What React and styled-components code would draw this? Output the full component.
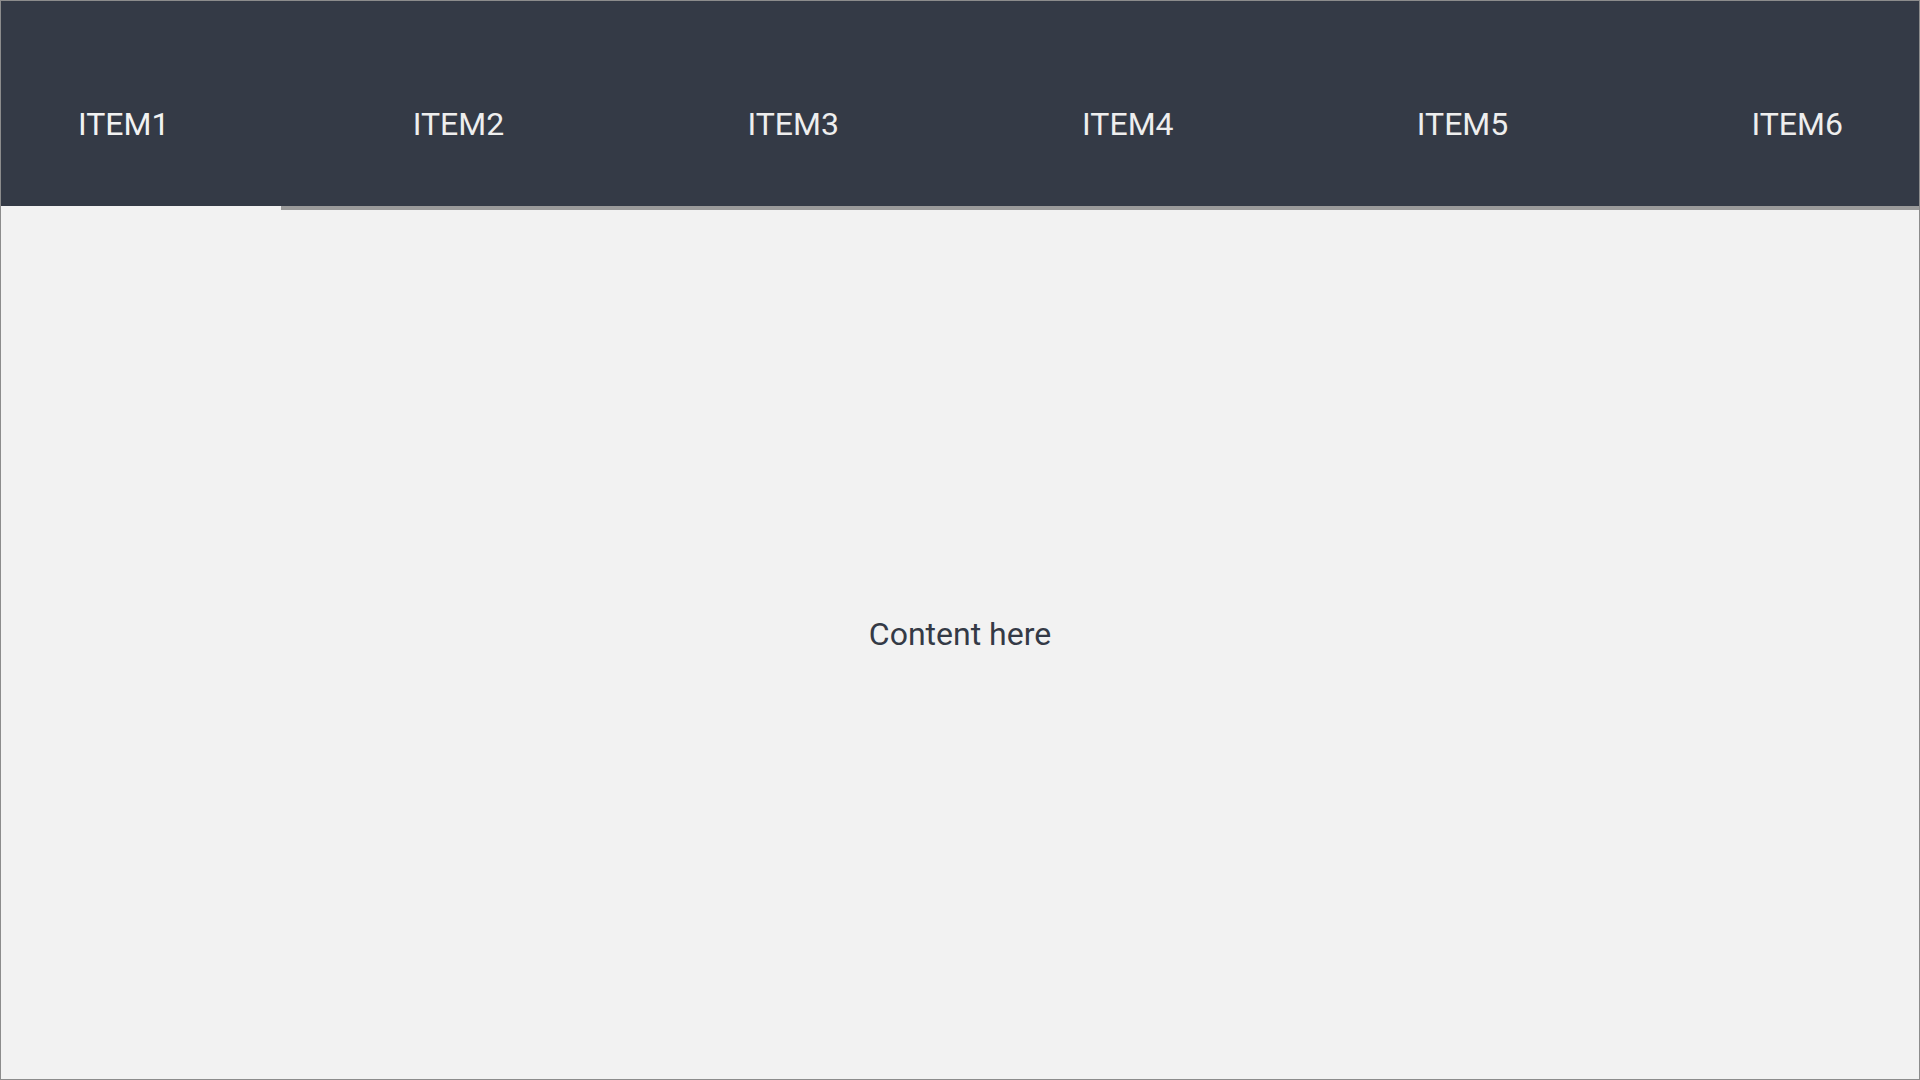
import React, { useState } from "react";
import styled, { createGlobalStyle } from "styled-components";

const Global = createGlobalStyle`
  html, body { margin: 0; padding: 0; }
  body { font-family: Roboto, "Noto Sans", sans-serif; background: #f2f2f2; }
  * { box-sizing: border-box; }
`;

const Frame = styled.div`
  width: 1920px;
  height: 1080px;
  border: 1px solid #8c8c8c;
  display: flex;
  flex-direction: column;
  background: #f2f2f2;
`;

const Header = styled.header`
  position: relative;
  background: #343a46;
  border-bottom: 4px solid #9a9a9a;
`;

const TabRow = styled.nav`
  height: 205px;
  display: flex;
  justify-content: space-between;
  align-items: flex-start;
  padding: 104px 76px 0 77px;
`;

const Tab = styled.button`
  background: none;
  border: none;
  padding: 0;
  margin: 0;
  font-family: Roboto, "Noto Sans", sans-serif;
  font-size: 32px;
  line-height: 38px;
  color: ${(p) => (p.$active ? "#f2f2f2" : "#eeeeee")};
  cursor: pointer;
`;

const Indicator = styled.div`
  position: absolute;
  left: 0;
  bottom: -4px;
  width: 280px;
  height: 4px;
  background: #f2f2f2;
`;

const Content = styled.main`
  flex: 1;
  display: flex;
  align-items: center;
  justify-content: center;
  padding-bottom: 22px;
  font-family: Roboto, "Noto Sans", sans-serif;
  font-size: 32px;
  color: #343a46;
`;

export default function App() {
  const [active, setActive] = useState(0);
  const items = ["ITEM1", "ITEM2", "ITEM3", "ITEM4", "ITEM5", "ITEM6"];
  return (
    <>
      <Global />
      <Frame>
        <Header>
          <TabRow>
            {items.map((it, i) => (
              <Tab key={it} $active={i === active} onClick={() => setActive(i)}>
                {it}
              </Tab>
            ))}
          </TabRow>
          <Indicator />
        </Header>
        <Content>Content here</Content>
      </Frame>
    </>
  );
}
